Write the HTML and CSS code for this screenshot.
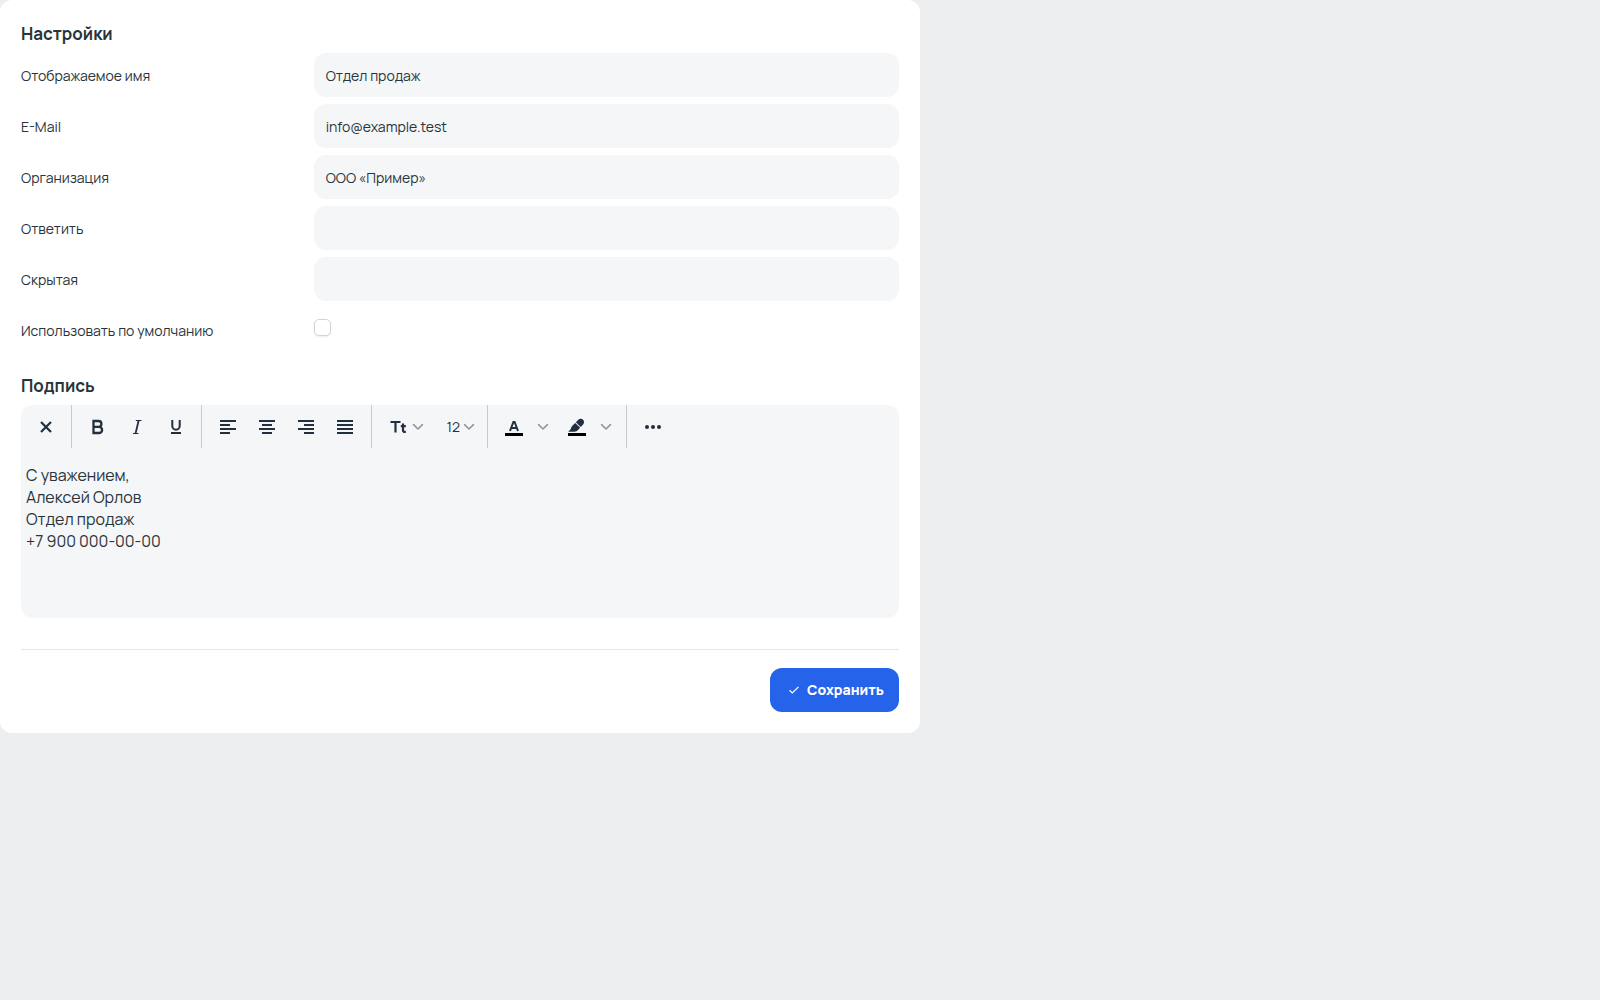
FILE: index.html
```html
<!DOCTYPE html>
<html lang="ru">
<head>
<meta charset="utf-8">
<title>Настройки</title>
<link rel="stylesheet" href="styles.css">
</head>
<body>
<svg class="sprite" aria-hidden="true">
  <symbol id="chevron" viewBox="0 0 12 12"><path d="M1.6 3.6 6 8l4.400-4.400" fill="none" stroke="currentColor" stroke-width="1.600" stroke-linecap="round" stroke-linejoin="round"/></symbol>
</svg>
<form class="card">
  <h2 class="title">Настройки</h2>
  <div class="fields">
    <label class="label" for="name">Отображаемое имя</label>
    <input class="input" id="name" type="text" value="Отдел продаж">
    <label class="label" for="email">E-Mail</label>
    <input class="input" id="email" type="email" value="info@example.test">
    <label class="label" for="org">Организация</label>
    <input class="input" id="org" type="text" value="ООО «Пример»">
    <label class="label" for="reply">Ответить</label>
    <input class="input" id="reply" type="text">
    <label class="label" for="bcc">Скрытая</label>
    <input class="input" id="bcc" type="text">
    <label class="label" for="default">Использовать по умолчанию</label>
    <div class="check-cell"><input class="check" id="default" type="checkbox"></div>
  </div>

  <h2 class="title title-signature">Подпись</h2>
  <div class="editor">
    <div class="toolbar" role="toolbar">
      <div class="group">
        <button class="tool" type="button" aria-label="Очистить"><svg width="24" height="24" viewBox="0 0 24 24"><path d="M7 7 17 17M17 7 7 17" stroke="currentColor" stroke-width="2.200"/></svg></button>
      </div>
      <div class="group">
        <button class="tool" type="button" aria-label="Полужирный"><svg width="24" height="24" viewBox="0 0 24 24"><path d="M7.500 6H12.500a2.900 2.900 0 0 1 0 5.800H7.500zM7.500 11.800H13a3.100 3.100 0 0 1 0 6.200H7.500z" fill="none" stroke="currentColor" stroke-width="2.300"/></svg></button>
        <button class="tool" type="button" aria-label="Курсив"><svg width="24" height="24" viewBox="0 0 24 24"><path d="M10.800 5.500H16.500M8 18.500h5.500" fill="none" stroke="currentColor" stroke-width="1.200"/><path d="M13.700 5.500 10.500 18.500" stroke="currentColor" stroke-width="1.800"/></svg></button>
        <button class="tool" type="button" aria-label="Подчёркнутый"><svg width="24" height="24" viewBox="0 0 24 24"><path d="M8.300 5V11a3.700 3.700 0 0 0 7.400 0V5M7 18h10" fill="none" stroke="currentColor" stroke-width="2"/></svg></button>
      </div>
      <div class="group group-align">
        <button class="tool" type="button" aria-label="По левому краю"><svg width="24" height="24" viewBox="0 0 24 24"><path d="M4 6h16M4 10h10M4 14h16M4 18h10" stroke="currentColor" stroke-width="2"/></svg></button>
        <button class="tool" type="button" aria-label="По центру"><svg width="24" height="24" viewBox="0 0 24 24"><path d="M4 6h16M7 10h10M4 14h16M7 18h10" stroke="currentColor" stroke-width="2"/></svg></button>
        <button class="tool" type="button" aria-label="По правому краю"><svg width="24" height="24" viewBox="0 0 24 24"><path d="M4 6h16M10 10h10M4 14h16M10 18h10" stroke="currentColor" stroke-width="2"/></svg></button>
        <button class="tool" type="button" aria-label="По ширине"><svg width="24" height="24" viewBox="0 0 24 24"><path d="M4 6h16M4 10h16M4 14h16M4 18h16" stroke="currentColor" stroke-width="2"/></svg></button>
      </div>
      <div class="group">
        <button class="tool tool-drop" type="button" aria-label="Шрифт"><svg width="16" height="16" viewBox="0 0 16 16"><path d="M.5 3h10M5.500 3v10.500M13 4.500v7q0 1.600 2.800 1.400M10.800 7.200h5" fill="none" stroke="currentColor" stroke-width="2.200"/></svg><svg class="chevron" width="12" height="12"><use href="#chevron"/></svg></button>
        <button class="tool tool-drop tool-size" type="button" aria-label="Размер шрифта">12<svg class="chevron" width="12" height="12"><use href="#chevron"/></svg></button>
      </div>
      <div class="group">
        <button class="tool" type="button" aria-label="Цвет текста"><svg width="24" height="24" viewBox="0 0 24 24"><path d="M8 16 11.400 7h1.200L16 16M9.300 13h5.400" fill="none" stroke="currentColor" stroke-width="2"/><path d="M3 18h18v3H3z" fill="#000"/></svg></button>
        <button class="tool tool-more" type="button" aria-label="Выбрать цвет текста"><svg class="chevron" width="12" height="12"><use href="#chevron"/></svg></button>
        <button class="tool" type="button" aria-label="Цвет фона"><svg width="24" height="24" viewBox="0 0 24 24"><path d="M12.900 5.200a3.300 3.300 0 0 1 4.900-.6 3.300 3.300 0 0 1 .3 4.900l-2.300 2.400-5-4.600zM10.200 8l4.900 4.600-2 2.300q-1.500 1.800-3.800 1.800H3.300l2.300-2.400q.4-2.400 2-3.900z" fill="currentColor"/><path d="M3 18h18v3H3z" fill="#000"/></svg></button>
        <button class="tool tool-more" type="button" aria-label="Выбрать цвет фона"><svg class="chevron" width="12" height="12"><use href="#chevron"/></svg></button>
      </div>
      <div class="group">
        <button class="tool" type="button" aria-label="Ещё"><svg width="24" height="24" viewBox="0 0 24 24" fill="currentColor"><circle cx="6" cy="12" r="2"/><circle cx="12" cy="12" r="2"/><circle cx="18" cy="12" r="2"/></svg></button>
      </div>
    </div>
    <textarea class="signature" aria-label="Подпись">С уважением,
Алексей Орлов
Отдел продаж
+7 900 000-00-00</textarea>
  </div>

  <div class="footer">
    <button class="save" type="submit"><svg width="12" height="12" viewBox="0 0 12 12"><path d="M1.500 6.300 4.300 9 10.500 2.800" fill="none" stroke="currentColor" stroke-width="1.200"/></svg>Сохранить</button>
  </div>
</form>
</body>
</html>
```
FILE: styles.css
```css
* {
  box-sizing: border-box;
}

body {
  margin: 0;
  background: #edeef0;
  color: #29343a;
  font: 14px/20px Manrope, Inter, sans-serif;
}

.sprite {
  display: none;
}

.card {
  max-width: 920px;
  padding: 21px;
  border-radius: 12px;
  background: #fff;
}

.title {
  margin: 0 0 7px;
  font-size: 17px;
  line-height: 25px;
  font-weight: 700;
}

.title-signature {
  margin-top: 21px;
}

.fields {
  display: grid;
  grid-template-columns: 1fr 2fr;
  grid-auto-rows: 44px;
  row-gap: 7px;
  align-items: center;
}

.label {
  padding-top: 2px;
}

.input {
  width: 100%;
  height: 44px;
  padding: 0 12px;
  border: 0;
  border-radius: 12px;
  background: #f4f6f8;
  color: inherit;
  font: inherit;
}

.check-cell {
  align-self: start;
  display: flex;
  padding-top: 11px;
}

.check {
  width: 17px;
  height: 17px;
  margin: 0;
  appearance: none;
  border: 1px solid #d1d5db;
  border-radius: 5px;
  background: #fff;
  box-shadow: 0 1px 2px rgba(0, 0, 0, 0.08);
}

.editor {
  border-radius: 12px;
  background: #f4f6f8;
  overflow: hidden;
}

.toolbar {
  display: flex;
  height: 43px;
}

.group {
  display: flex;
  padding: 0 6px;
  border-right: 1px solid #c8cacd;
}

.group:first-child {
  padding-left: 5px;
}

.group-align {
  padding-right: 7px;
}

.group:last-child {
  border-right: 0;
}

.tool {
  display: flex;
  align-items: center;
  justify-content: center;
  width: 39px;
  padding: 0;
  border: 0;
  background: none;
  color: #222f3e;
  font: inherit;
}

.tool-drop {
  width: 52px;
  padding-right: 6px;
  gap: 6px;
  justify-content: flex-end;
}

.tool-size {
  width: 51px;
  gap: 3px;
}

.tool-more {
  width: 24px;
  padding-left: 4px;
  justify-content: flex-start;
}

.chevron {
  color: #90979f;
}

.signature {
  display: block;
  width: 100%;
  height: 170px;
  padding: 16px 5px;
  border: 0;
  background: none;
  color: inherit;
  font: inherit;
  font-size: 16px;
  line-height: 22px;
  resize: none;
}

.footer {
  display: flex;
  justify-content: flex-end;
  margin-top: 31px;
  padding-top: 18px;
  border-top: 1px solid #e5e7eb;
}

.save {
  display: flex;
  align-items: center;
  gap: 7px;
  height: 44px;
  padding: 0 15px 0 18px;
  border: 0;
  border-radius: 12px;
  background: #2563eb;
  color: #fff;
  font: inherit;
  font-weight: 800;
}
```
